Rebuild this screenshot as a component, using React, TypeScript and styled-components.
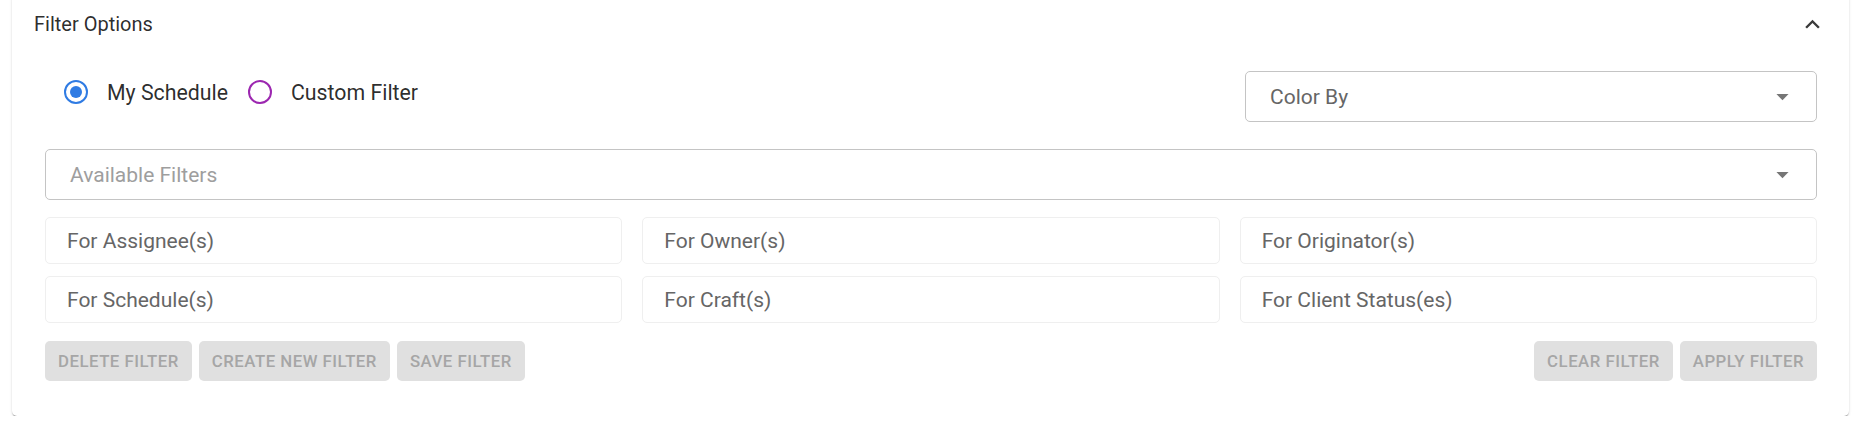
import { useState } from 'react';
import styled, { createGlobalStyle } from 'styled-components';

const GlobalStyle = createGlobalStyle`
  body {
    margin: 0;
    background: #ffffff;
    font-family: Roboto, 'Liberation Sans', Arial, sans-serif;
  }
`;

type ScheduleMode = 'mine' | 'custom';

const filterFields = [
  'For Assignee(s)',
  'For Owner(s)',
  'For Originator(s)',
  'For Schedule(s)',
  'For Craft(s)',
  'For Client Status(es)',
];

const ArrowDropDown = () => (
  <svg width="29" height="29" viewBox="0 0 24 24" fill="#767676">
    <path d="M7 10l5 5 5-5z" />
  </svg>
);

const ExpandLess = () => (
  <svg width="29" height="29" viewBox="0 0 24 24" fill="#3a3a3a">
    <path d="M12 8l-6 6 1.41 1.41L12 10.83l4.59 4.58L18 14z" />
  </svg>
);

const App = () => {
  const [mode, setMode] = useState<ScheduleMode>('mine');

  return (
    <Page>
      <GlobalStyle />
      <Card>
        <Header>
          <Title>Filter Options</Title>
          <ExpandLess />
        </Header>
        <Body>
          <TopRow>
            <RadioGroup>
              <RadioOption onClick={() => setMode('mine')}>
                <RadioCircle color="#2f7be3" checked={mode === 'mine'} />
                <span>My Schedule</span>
              </RadioOption>
              <RadioOption onClick={() => setMode('custom')}>
                <RadioCircle color="#9c27b0" checked={mode === 'custom'} />
                <span>Custom Filter</span>
              </RadioOption>
            </RadioGroup>
            <ColorSelect>
              <SelectText>Color By</SelectText>
              <ArrowDropDown />
            </ColorSelect>
          </TopRow>
          <FilterSelect>
            <SelectText placeholder="true">Available Filters</SelectText>
            <ArrowDropDown />
          </FilterSelect>
          <FieldGrid>
            {filterFields.map((label) => (
              <FieldBox key={label}>{label}</FieldBox>
            ))}
          </FieldGrid>
          <ButtonRow>
            <ButtonGroup>
              <ActionButton disabled>Delete Filter</ActionButton>
              <ActionButton disabled>Create New Filter</ActionButton>
              <ActionButton disabled>Save Filter</ActionButton>
            </ButtonGroup>
            <ButtonGroup>
              <ActionButton disabled>Clear Filter</ActionButton>
              <ActionButton disabled>Apply Filter</ActionButton>
            </ButtonGroup>
          </ButtonRow>
        </Body>
      </Card>
    </Page>
  );
};

const Page = styled.div`
  padding: 0 16px 0 12px;
`;

const Card = styled.div`
  margin-top: -6px;
  background: #ffffff;
  border-radius: 5px;
  box-shadow: 0px 2px 1px -1px rgba(0, 0, 0, 0.2), 0px 1px 1px 0px rgba(0, 0, 0, 0.14),
    0px 1px 3px 0px rgba(0, 0, 0, 0.12);
  padding-bottom: 35px;
`;

const Header = styled.div`
  display: flex;
  align-items: center;
  justify-content: space-between;
  height: 60px;
  padding: 0 22px;

  > svg {
    display: block;
  }
`;

const Title = styled.span`
  font-size: 20px;
  color: rgba(0, 0, 0, 0.84);
`;

const Body = styled.div`
  padding: 13px 32px 0 33px;
`;

const TopRow = styled.div`
  display: flex;
  justify-content: space-between;
  align-items: flex-start;
`;

const RadioGroup = styled.div`
  display: flex;
  align-items: center;
  gap: 20px;
  height: 50px;
  padding-left: 19px;
`;

const RadioOption = styled.label`
  display: flex;
  align-items: center;
  gap: 19px;
  font-size: 21.3px;
  color: rgba(0, 0, 0, 0.84);
  cursor: pointer;
`;

const RadioCircle = styled.span<{ color: string; checked: boolean }>`
  position: relative;
  box-sizing: border-box;
  width: 24px;
  height: 24px;
  border-radius: 50%;
  border: 2.4px solid ${({ color }) => color};

  &::after {
    content: '';
    display: ${({ checked }) => (checked ? 'block' : 'none')};
    position: absolute;
    inset: 3.6px;
    border-radius: 50%;
    background: ${({ color }) => color};
  }
`;

const SelectBox = styled.div`
  box-sizing: border-box;
  display: flex;
  align-items: center;
  justify-content: space-between;
  height: 51px;
  padding: 0 19px 0 24px;
  border: 1px solid #c4c4c4;
  border-radius: 5px;

  > svg {
    display: block;
  }
`;

const ColorSelect = styled(SelectBox)`
  width: 572px;
  margin-top: 4px;
`;

const FilterSelect = styled(SelectBox)`
  margin-top: 27px;
`;

const SelectText = styled.span<{ placeholder?: string }>`
  font-size: 21px;
  color: ${({ placeholder }) => (placeholder ? '#9e9e9e' : '#666666')};
`;

const FieldGrid = styled.div`
  display: grid;
  grid-template-columns: repeat(3, 1fr);
  column-gap: 20px;
  row-gap: 12px;
  margin-top: 17px;
`;

const FieldBox = styled.div`
  box-sizing: border-box;
  display: flex;
  align-items: center;
  height: 47px;
  padding-left: 21px;
  border: 1px solid #efefef;
  border-radius: 5px;
  font-size: 21px;
  color: #666666;
`;

const ButtonRow = styled.div`
  display: flex;
  justify-content: space-between;
  margin-top: 18px;
`;

const ButtonGroup = styled.div`
  display: flex;
  gap: 7px;
`;

const ActionButton = styled.button`
  height: 40px;
  padding: 0 13px;
  border: none;
  border-radius: 5px;
  background: #e0e0e0;
  color: #a6a6a6;
  font-family: Roboto, 'Liberation Sans', Arial, sans-serif;
  font-size: 16.8px;
  font-weight: 500;
  letter-spacing: 0.5px;
  text-transform: uppercase;
`;

export default App;
